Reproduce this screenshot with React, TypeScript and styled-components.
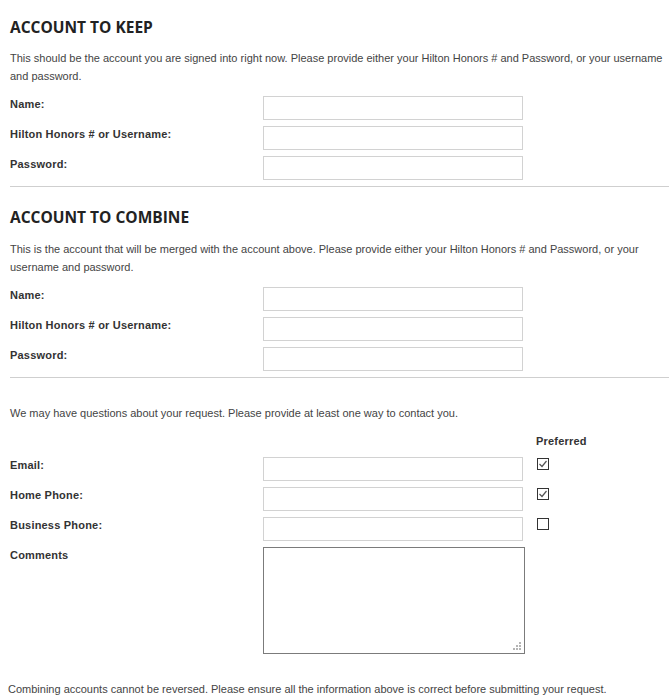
import React from 'react';
import styled, { createGlobalStyle } from 'styled-components';

const GlobalStyle = createGlobalStyle`
  body {
    margin: 0;
    background: #fff;
    font-family: "Liberation Sans", Arial, sans-serif;
  }
`;

const Page = styled.div`
  padding: 17px 0 20px 10px;
  width: 659px;
`;

const Section = styled.section<{ $top?: number }>`
  padding-top: ${(p) => p.$top ?? 0}px;
`;

const Heading = styled.h2`
  margin: 0;
  font-family: "Open Sans", "Liberation Sans", sans-serif;
  font-size: 15.5px;
  line-height: 20px;
  font-weight: 700;
  color: #222;
`;

const Intro = styled.p<{ $top?: number }>`
  margin: ${(p) => p.$top ?? 12}px 0 0;
  font-size: 11px;
  line-height: 18px;
  color: #444;
`;

const Fields = styled.div<{ $top?: number }>`
  display: grid;
  grid-template-columns: 253px 260px auto;
  row-gap: 6px;
  margin-top: ${(p) => p.$top ?? 11}px;
  align-items: start;
`;

const Label = styled.label`
  font-size: 11px;
  line-height: 16px;
  font-weight: 700;
  letter-spacing: 0.2px;
  color: #333;
`;

const ColumnHead = styled.span`
  grid-column: 3;
  font-size: 11px;
  line-height: 16px;
  font-weight: 700;
  letter-spacing: 0.2px;
  color: #333;
  white-space: nowrap;
  margin: 0 0 2px 13px;
`;

const Input = styled.input`
  box-sizing: border-box;
  width: 260px;
  height: 24px;
  margin: 0;
  border: 1px solid #d2d2d2;
  background: #fff;
  outline: none;
`;

const Divider = styled.hr`
  margin: 6px 0 0;
  border: 0;
  border-top: 1px solid #cfcfcf;
`;

const Box = styled.span`
  box-sizing: border-box;
  display: flex;
  align-items: center;
  justify-content: center;
  width: 12px;
  height: 12px;
  margin: 1px 0 0 14px;
  border: 1px solid #333;
  background: #fff;
`;

const AreaWrap = styled.div`
  position: relative;
  width: 262px;
  height: 107px;
`;

const Area = styled.textarea`
  box-sizing: border-box;
  width: 262px;
  height: 107px;
  margin: 0;
  border: 1px solid #7b7b7b;
  resize: none;
  outline: none;
`;

const Grip = styled.svg`
  position: absolute;
  right: 3px;
  bottom: 3px;
`;

const Footer = styled.p`
  margin: 26px 0 0 -2px;
  font-size: 11px;
  line-height: 18px;
  color: #444;
`;

const Check: React.FC<{ on?: boolean }> = ({ on }) => (
  <Box>
    {on && (
      <svg width="10" height="10" viewBox="0 0 10 10">
        <path d="M1.5 5 L4 7.5 L8.5 2" fill="none" stroke="#555" strokeWidth="1.2" />
      </svg>
    )}
  </Box>
);

const AccountFields: React.FC = () => (
  <Fields>
    <Label>Name:</Label>
    <Input />
    <span />
    <Label>Hilton Honors # or Username:</Label>
    <Input />
    <span />
    <Label>Password:</Label>
    <Input type="password" />
    <span />
  </Fields>
);

const App: React.FC = () => (
  <>
    <GlobalStyle />
    <Page>
      <Section>
        <Heading>ACCOUNT TO KEEP</Heading>
        <Intro>
          This should be the account you are signed into right now. Please provide either your Hilton Honors # and
          Password, or your username and password.
        </Intro>
        <AccountFields />
        <Divider />
      </Section>

      <Section $top={20}>
        <Heading>ACCOUNT TO COMBINE</Heading>
        <Intro $top={13}>
          This is the account that will be merged with the account above. Please provide either your Hilton Honors #
          and Password, or your username and password.
        </Intro>
        <AccountFields />
        <Divider />
      </Section>

      <Section>
        <Intro $top={26}>We may have questions about your request. Please provide at least one way to contact you.</Intro>
        <Fields $top={11}>
          <span />
          <span />
          <ColumnHead>Preferred</ColumnHead>
          <Label>Email:</Label>
          <Input />
          <Check on />
          <Label>Home Phone:</Label>
          <Input />
          <Check on />
          <Label>Business Phone:</Label>
          <Input />
          <Check />
          <Label>Comments</Label>
          <AreaWrap>
            <Area />
            <Grip width="9" height="9" viewBox="0 0 9 9">
              {[
                [6, 0],
                [6, 3],
                [3, 3],
                [6, 6],
                [3, 6],
                [0, 6],
              ].map(([x, y]) => (
                <rect key={`${x}-${y}`} x={x} y={y} width="2" height="2" fill="#b5b5b5" />
              ))}
            </Grip>
          </AreaWrap>
          <span />
        </Fields>
        <Footer>
          Combining accounts cannot be reversed. Please ensure all the information above is correct before submitting
          your request.
        </Footer>
      </Section>
    </Page>
  </>
);

export default App;
